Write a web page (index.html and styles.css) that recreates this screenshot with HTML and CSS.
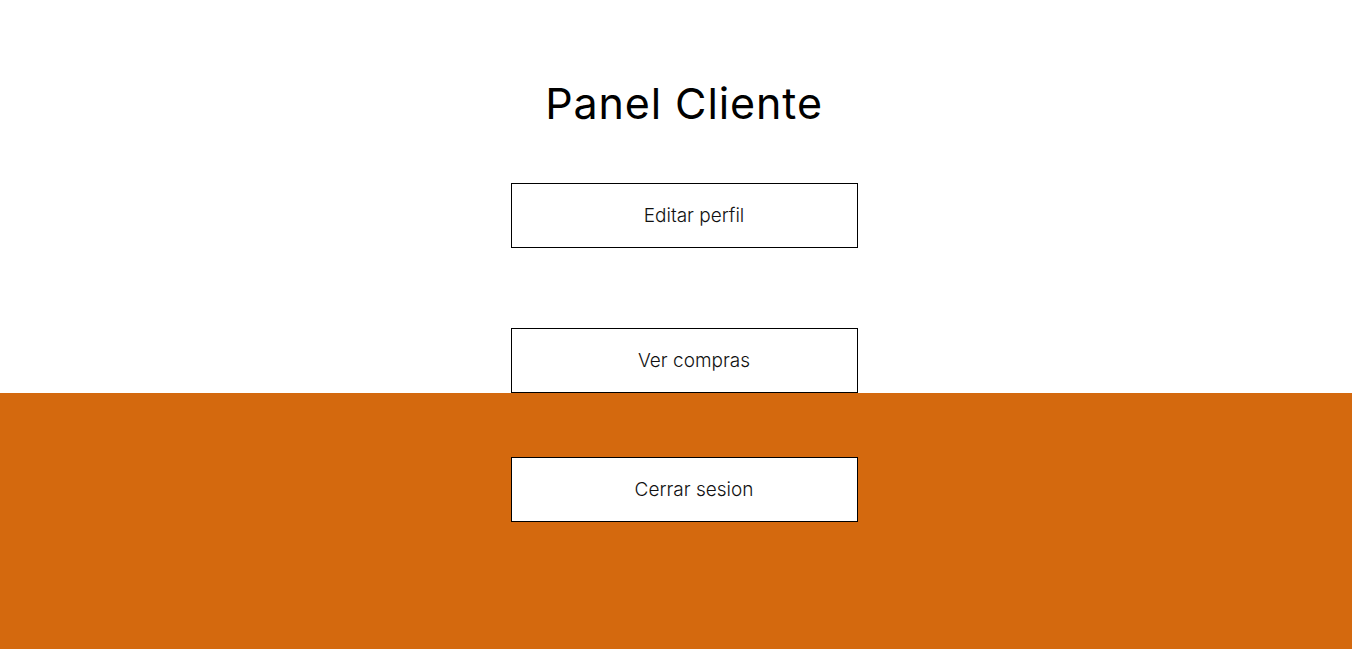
FILE: index.html
```html
<!DOCTYPE html>
<html lang="es">
<head>
<meta charset="utf-8">
<title>Panel Cliente</title>
<link rel="stylesheet" href="styles.css">
</head>
<body>
  <section class="top">
    <h1 class="title">Panel Cliente</h1>
    <a class="btn btn-first" href="#">Editar perfil</a>
    <a class="btn btn-second" href="#">Ver compras</a>
  </section>
  <section class="bottom">
    <a class="btn" href="#">Cerrar sesion</a>
  </section>
</body>
</html>
```
FILE: styles.css
```css
* { box-sizing: border-box; }
html, body { margin: 0; padding: 0; }
body {
  font-family: "Inter", "Noto Sans", sans-serif;
  background: #d4690e;
  color: #000;
  min-height: 649px;
}
.top {
  background: #fff;
  height: 393px;
  display: flex;
  flex-direction: column;
  align-items: center;
  padding-top: 78px;
  padding-left: 16px;
}
.title {
  margin: 0;
  font-size: 43px;
  font-weight: 400;
  line-height: 50px;
  letter-spacing: 0.9px;
}
.btn {
  display: flex;
  align-items: center;
  justify-content: center;
  width: 347px;
  height: 65px;
  border: 1px solid #000;
  background: #fff;
  color: #111;
  text-decoration: none;
  font-size: 19px;
  font-weight: 300;
  padding-left: 20px;
}
.btn-first { margin-top: 55px; }
.btn-second { margin-top: 80px; }
.bottom {
  display: flex;
  flex-direction: column;
  align-items: center;
  padding-top: 64px;
  padding-left: 16px;
  height: 256px;
}
```
